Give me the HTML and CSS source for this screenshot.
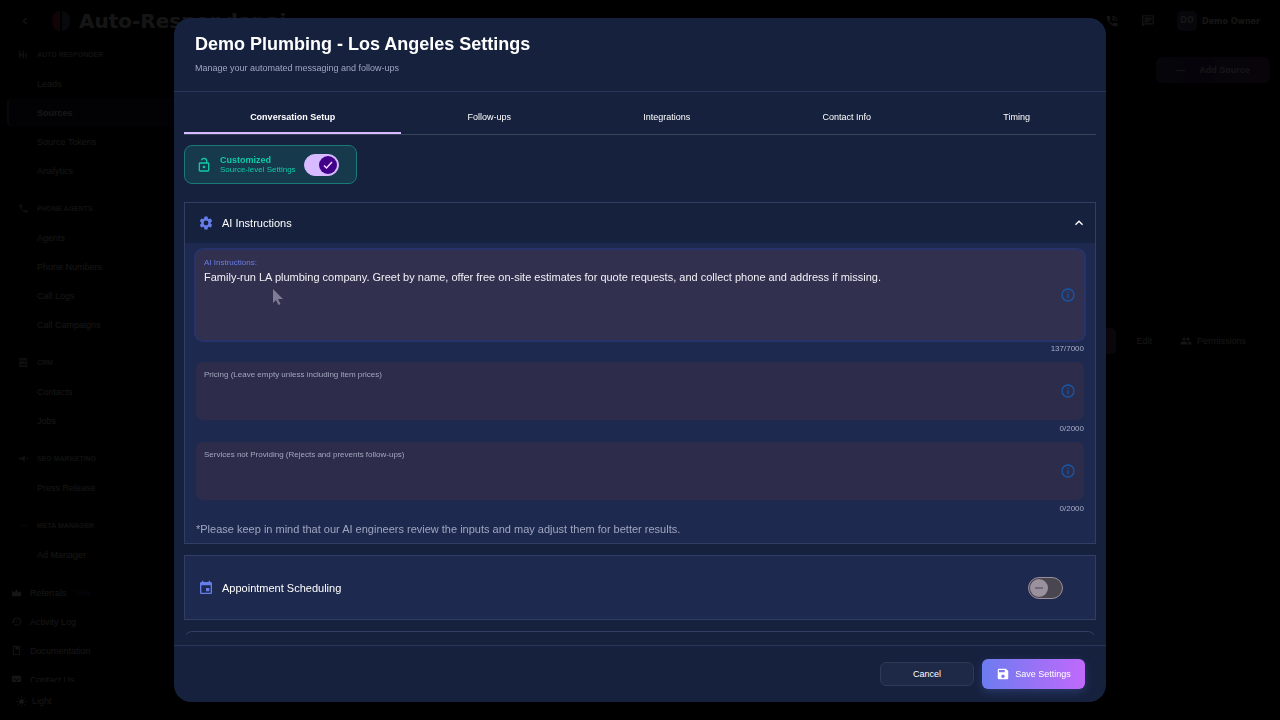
FILE: index.html
```html
<!DOCTYPE html>
<html lang="en">
<head>
    <meta charset="UTF-8">
    <meta name="viewport" content="width=device-width, initial-scale=1.0">
    <title>Demo Plumbing - Los Angeles Settings</title>
    <link rel="stylesheet" href="styles.css">
</head>
<body>
    <div class="app">
        <header class="topbar">
            <button class="icon-button" type="button" aria-label="Back">
                <svg viewBox="0 0 24 24" width="14" height="14"><path d="M15.4 7.4 14 6l-6 6 6 6 1.4-1.4-4.6-4.6z"/></svg>
            </button>
            <svg class="logo" viewBox="0 0 20 22" width="20" height="22">
                <path fill="#a02c3c" d="M9 1C4 1 1 5 1 11s3 10 8 10z"/>
                <path fill="#4a6078" d="M11 1c5 0 8 4 8 10s-3 10-8 10z"/>
            </svg>
            <span class="brand">Auto-Responder.ai</span>
            <div class="topbar-right">
                <svg viewBox="0 0 24 24" width="14" height="14"><path d="M20 15.500c-1.200 0-2.400-.2-3.600-.6-.4-.1-.7 0-1 .2l-2.200 2.200a15 15 0 0 1-6.600-6.600l2.200-2.200c.3-.3.4-.7.2-1C8.700 6.400 8.500 5.200 8.500 4c0-.6-.4-1-1-1H4c-.6 0-1 .4-1 1 0 9.400 7.600 17 17 17 .6 0 1-.4 1-1v-3.500c0-.5-.4-1-1-1zM19 12h2a9 9 0 0 0-9-9v2a7 7 0 0 1 7 7zm-4 0h2a5 5 0 0 0-5-5v2a3 3 0 0 1 3 3z"/></svg>
                <svg viewBox="0 0 24 24" width="14" height="14"><path d="M20 2H4a2 2 0 0 0-2 2v18l4-4h14a2 2 0 0 0 2-2V4a2 2 0 0 0-2-2zm0 14H4V4h16zM6 12h8v2H6zm0-3h12v2H6zm0-3h12v2H6z"/></svg>
                <div class="user">
                    <span class="avatar">DO</span>
                    <span>Demo Owner</span>
                </div>
            </div>
        </header>
        <div class="layout">
            <aside class="sidebar">
                <nav class="sidebar-nav">
                    <h3><svg viewBox="0 0 24 24" width="11" height="11"><path d="M2 4h3v7h5V4h3v16h-3v-6H5v6H2zm14 6h3v10h-3z"/></svg>AUTO RESPONDER</h3>
                    <a href="#">Leads</a>
                    <a href="#" class="active">Sources</a>
                    <a href="#">Source Tokens</a>
                    <a href="#">Analytics</a>
                    <h3><svg viewBox="0 0 24 24" width="11" height="11"><path d="M20 15.500c-1.200 0-2.400-.2-3.600-.6-.4-.1-.7 0-1 .2l-2.200 2.200a15 15 0 0 1-6.600-6.600l2.200-2.200c.3-.3.4-.7.2-1C8.700 6.400 8.500 5.200 8.500 4c0-.6-.4-1-1-1H4c-.6 0-1 .4-1 1 0 9.400 7.600 17 17 17 .6 0 1-.4 1-1v-3.500c0-.5-.4-1-1-1z"/></svg>PHONE AGENTS</h3>
                    <a href="#">Agents</a>
                    <a href="#">Phone Numbers</a>
                    <a href="#">Call Logs</a>
                    <a href="#">Call Campaigns</a>
                    <h3><svg viewBox="0 0 24 24" width="11" height="11"><path d="M3 2h17v20H3zm3 4v4h4V6zm6 0v2h6V6zm0 4v2h6v-2zm-6 5v3h12v-3z"/></svg>CRM</h3>
                    <a href="#">Contacts</a>
                    <a href="#">Jobs</a>
                    <h3><svg viewBox="0 0 24 24" width="11" height="11"><path d="M2 10h6l7-5v14l-7-5H2zm15 1h6v2h-6z"/></svg>SEO MARKETING</h3>
                    <a href="#">Press Release</a>
                    <h3><svg viewBox="0 0 24 24" width="11" height="11" class="faint"><path d="M2 10h20v4H2z"/></svg>META MANAGER</h3>
                    <a href="#">Ad Manager</a>
                    <div class="more">
                        <a href="#"><svg viewBox="0 0 24 24" width="11" height="11"><path d="M2 8l5 4 5-7 5 7 5-4v12H2z"/></svg>Referrals <span class="new">NEW</span></a>
                        <a href="#"><svg viewBox="0 0 24 24" width="11" height="11"><path d="M13 3a9 9 0 0 0-9 9H1l4 4 4-4H6a7 7 0 1 1 2 5l-1.400 1.400A9 9 0 1 0 13 3zm-1 5v5l4 3 1-1-3.500-2.500V8z"/></svg>Activity Log</a>
                        <a href="#"><svg viewBox="0 0 24 24" width="11" height="11"><path d="M4 2h16v20H4zm2 2v16h12V4h-2v7l-3-2-3 2V4z"/></svg>Documentation</a>
                        <a href="#"><svg viewBox="0 0 24 24" width="11" height="11"><path d="M2 4h20v16H2zm2 4v2l8 5 8-5V8l-8 5z"/></svg>Contact Us</a>
                    </div>
                </nav>
                <button class="theme" type="button">
                    <svg viewBox="0 0 24 24" width="11" height="11"><circle cx="12" cy="12" r="5"/><path d="M11 1h2v4h-2zm0 18h2v4h-2zM1 11h4v2H1zm18 0h4v2h-4zM4 5l1-1 3 3-1 1zm12 12 1-1 3 3-1 1zM4 19l3-3 1 1-3 3zM16 7l3-3 1 1-3 3z"/></svg>
                    Light
                </button>
            </aside>
            <main class="content">
                <button class="add" type="button"><span>—</span> Add Source</button>
                <section class="source-card">
                    <button class="chip-button" type="button" aria-label="Settings"></button>
                    <button type="button">Edit</button>
                    <button type="button"><svg viewBox="0 0 24 24" width="12" height="12"><path d="M8 11a3 3 0 1 0 0-6 3 3 0 0 0 0 6zm8 0a3 3 0 1 0 0-6 3 3 0 0 0 0 6zm-8 2c-2.300 0-7 1.200-7 3.500V19h14v-2.500C15 14.200 10.300 13 8 13zm8 0h-1c1.200.8 2 2 2 3.500V19h6v-2.500c0-2.300-4.700-3.500-7-3.500z"/></svg>Permissions</button>
                </section>
            </main>
        </div>
    </div>

    <div class="backdrop">
        <div class="dialog" role="dialog" aria-modal="true" aria-labelledby="dialogTitle">
            <header class="dialog-header">
                <h2 id="dialogTitle">Demo Plumbing - Los Angeles Settings</h2>
                <p>Manage your automated messaging and follow-ups</p>
            </header>

            <div class="dialog-body">
                <div class="tabs" role="tablist">
                    <button class="tab selected" type="button" role="tab" aria-selected="true">Conversation Setup</button>
                    <button class="tab" type="button" role="tab">Follow-ups</button>
                    <button class="tab" type="button" role="tab">Integrations</button>
                    <button class="tab" type="button" role="tab">Contact Info</button>
                    <button class="tab" type="button" role="tab">Timing</button>
                </div>

                <div class="panel">
                    <div class="customized">
                        <svg viewBox="0 0 24 24" width="16" height="16"><path d="M18 8h-1V6A5 5 0 0 0 7.200 4.600l1.900.5A3 3 0 0 1 15 6v2H6a2 2 0 0 0-2 2v10c0 1.100.9 2 2 2h12a2 2 0 0 0 2-2V10a2 2 0 0 0-2-2zm0 12H6V10h12zm-6-3a2 2 0 1 0 0-4 2 2 0 0 0 0 4z"/></svg>
                        <label for="customized">
                            <strong>Customized</strong>
                            <span>Source-level Settings</span>
                        </label>
                        <span class="switch">
                            <input type="checkbox" id="customized" checked>
                            <svg class="thumb" viewBox="0 0 18 18" width="18" height="18"><circle cx="9" cy="9" r="9"/><path d="m5 9.500 2.500 2.500L13 6"/></svg>
                        </span>
                    </div>

                    <section class="card">
                        <button class="card-header" type="button" aria-expanded="true">
                            <svg class="accent" viewBox="0 0 24 24" width="16" height="16"><path d="M19.140 12.940c.04-.3.060-.61.060-.94s-.02-.64-.07-.94l2.030-1.580a.49.49 0 0 0 .12-.61l-1.920-3.320a.49.49 0 0 0-.59-.22l-2.390.96c-.5-.38-1.030-.7-1.620-.94l-.36-2.540A.48.48 0 0 0 13.920 2.400h-3.840c-.24 0-.43.17-.47.41l-.36 2.540c-.59.24-1.130.57-1.620.94l-2.390-.96a.48.48 0 0 0-.59.22L2.740 8.870c-.12.21-.08.47.12.61l2.030 1.580c-.05.3-.09.63-.09.94s.02.64.07.94l-2.030 1.580a.49.49 0 0 0-.12.61l1.920 3.320c.12.22.37.29.59.22l2.390-.96c.5.38 1.030.7 1.620.94l.36 2.540c.05.24.24.41.48.41h3.840c.24 0 .44-.17.47-.41l.36-2.540c.59-.24 1.130-.56 1.620-.94l2.390.96c.22.08.47 0 .59-.22l1.920-3.320a.48.48 0 0 0-.12-.61zM12 15.600a3.600 3.600 0 1 1 0-7.200 3.600 3.600 0 0 1 0 7.200z"/></svg>
                            <span>AI Instructions</span>
                            <svg class="chevron" viewBox="0 0 24 24" width="16" height="16"><path d="m12 8-6 6 1.400 1.400 4.600-4.600 4.600 4.600L18 14z"/></svg>
                        </button>
                        <div class="card-body">
                            <div class="field focused">
                                <div class="field-text">
                                    <label for="instructions">AI Instructions:</label>
                                    <textarea id="instructions" rows="4">Family-run LA plumbing company. Greet by name, offer free on-site estimates for quote requests, and collect phone and address if missing.</textarea>
                                </div>
                                <svg class="info" viewBox="0 0 24 24" width="16" height="16"><path d="M11 7h2v2h-2zm0 4h2v6h-2zm1-9a10 10 0 1 0 0 20 10 10 0 0 0 0-20zm0 18a8 8 0 1 1 0-16 8 8 0 0 1 0 16z"/></svg>
                            </div>
                            <p class="counter">137/7000</p>
                            <div class="field">
                                <div class="field-text">
                                    <label for="pricing">Pricing (Leave empty unless including item prices)</label>
                                    <textarea id="pricing" rows="2"></textarea>
                                </div>
                                <svg class="info" viewBox="0 0 24 24" width="16" height="16"><path d="M11 7h2v2h-2zm0 4h2v6h-2zm1-9a10 10 0 1 0 0 20 10 10 0 0 0 0-20zm0 18a8 8 0 1 1 0-16 8 8 0 0 1 0 16z"/></svg>
                            </div>
                            <p class="counter">0/2000</p>
                            <div class="field">
                                <div class="field-text">
                                    <label for="services">Services not Providing (Rejects and prevents follow-ups)</label>
                                    <textarea id="services" rows="2"></textarea>
                                </div>
                                <svg class="info" viewBox="0 0 24 24" width="16" height="16"><path d="M11 7h2v2h-2zm0 4h2v6h-2zm1-9a10 10 0 1 0 0 20 10 10 0 0 0 0-20zm0 18a8 8 0 1 1 0-16 8 8 0 0 1 0 16z"/></svg>
                            </div>
                            <p class="counter">0/2000</p>
                            <p class="note">*Please keep in mind that our AI engineers review the inputs and may adjust them for better results.</p>
                        </div>
                    </section>

                    <section class="card card-row">
                        <svg class="accent" viewBox="0 0 24 24" width="16" height="16"><path d="M17 12h-5v5h5zM16 1v2H8V1H6v2H5a2 2 0 0 0-2 2v14c0 1.100.9 2 2 2h14a2 2 0 0 0 2-2V5a2 2 0 0 0-2-2h-1V1zm3 18H5V8h14z"/></svg>
                        <label for="scheduling">Appointment Scheduling</label>
                        <span class="switch">
                            <input type="checkbox" id="scheduling">
                            <svg class="thumb" viewBox="0 0 18 18" width="18" height="18"><circle cx="9" cy="9" r="9"/><path d="M5 9h8"/></svg>
                        </span>
                    </section>

                    <section class="card card-next"></section>
                </div>
            </div>

            <footer class="dialog-footer">
                <button class="cancel" type="button">Cancel</button>
                <button class="save" type="button">
                    <svg viewBox="0 0 24 24" width="14" height="14"><path d="M17 3H5a2 2 0 0 0-2 2v14c0 1.100.9 2 2 2h14a2 2 0 0 0 2-2V7zm-5 16a3 3 0 1 1 0-6 3 3 0 0 1 0 6zm3-10H5V5h10z"/></svg>
                    Save Settings
                </button>
            </footer>
        </div>
    </div>

    <svg class="cursor" viewBox="0 0 12 18" width="12" height="18"><path d="M1 1v14l3-3 2.500 5 2-1L6 11h5z"/></svg>
</body>
</html>
```
FILE: styles.css
```css
* {
    box-sizing: border-box;
}
body {
    margin: 0;
    background: #000;
    color: #fff;
    font-family: "Liberation Sans", Arial, sans-serif;
    overflow: hidden;
}
button {
    font-family: inherit;
    color: inherit;
    background: none;
    border: none;
    padding: 0;
    cursor: pointer;
}
svg {
    fill: currentColor;
    flex-shrink: 0;
}
h2, h3, p {
    margin: 0;
}

/* page behind the dialog */
.app {
    display: flex;
    flex-direction: column;
    height: 100vh;
    color: #d8d8d8;
}
.topbar {
    display: flex;
    align-items: center;
    height: 42px;
    padding: 0 20px 0 18px;
}
.icon-button {
    display: flex;
    margin-right: 19px;
}
.brand {
    margin-left: 8px;
    font-family: "DejaVu Sans", Verdana, sans-serif;
    font-size: 20px;
    font-weight: bold;
}
.topbar-right {
    display: flex;
    align-items: center;
    gap: 22px;
    margin-left: auto;
}
.user {
    display: flex;
    align-items: center;
    gap: 5px;
    font-family: "DejaVu Sans", Verdana, sans-serif;
    font-size: 8px;
    font-weight: bold;
}
.avatar {
    width: 20px;
    line-height: 20px;
    border-radius: 5px;
    background: #4a4370;
    text-align: center;
}
.layout {
    display: flex;
    flex: 1;
    min-height: 0;
}
.sidebar {
    display: flex;
    flex-direction: column;
    width: 180px;
    font-size: 9px;
}
.sidebar-nav {
    flex: 1;
    min-height: 0;
    overflow: hidden;
}
.sidebar h3 {
    display: flex;
    align-items: center;
    gap: 8px;
    height: 29px;
    margin-top: 9px;
    padding-left: 18px;
    font-size: 7px;
    font-weight: bold;
    color: #a0a0a0;
}
.sidebar h3:first-child {
    margin-top: -2px;
}
.sidebar a {
    display: flex;
    align-items: center;
    height: 29px;
    margin-left: 7px;
    padding-left: 30px;
    color: inherit;
    text-decoration: none;
}
.sidebar .active {
    padding-left: 28px;
    border-left: 2px solid #565676;
    border-radius: 5px;
    background: #1c1c2a;
    font-weight: bold;
}
.sidebar .more {
    margin-top: 9px;
}
.sidebar .more a {
    gap: 8px;
    margin-left: 0;
    padding-left: 11px;
}
.faint {
    opacity: 0.3;
}
.new {
    color: #3c4c9c;
    font-size: 7px;
}
.theme {
    display: flex;
    align-items: center;
    gap: 5px;
    height: 38px;
    padding-left: 16px;
    font-size: 9px;
}
.content {
    display: flex;
    flex: 1;
    flex-direction: column;
    align-items: flex-end;
    padding: 15px 10px;
}
.add {
    width: 114px;
    height: 26px;
    border-radius: 6px;
    background: linear-gradient(90deg, #343464, #542868);
    font-size: 9px;
    font-weight: bold;
}
.add span {
    margin-right: 12px;
}
.source-card {
    display: flex;
    justify-content: flex-end;
    align-items: center;
    gap: 12px;
    width: 100%;
    margin-top: 245px;
    padding-right: 16px;
}
.source-card button {
    display: flex;
    align-items: center;
    gap: 5px;
    height: 26px;
    padding: 0 8px;
    font-size: 9px;
}
.source-card .chip-button {
    width: 50px;
    border-radius: 5px;
    background: #6c3c7c;
}

/* dialog */
.backdrop {
    position: fixed;
    inset: 0;
    display: flex;
    align-items: center;
    justify-content: center;
    background: rgba(0, 0, 0, 0.9);
}
.dialog {
    display: flex;
    flex-direction: column;
    width: 90%;
    max-width: 932px;
    height: 95vh;
    border-radius: 17px;
    background: #16213e;
    overflow: hidden;
}
.dialog-header {
    padding: 14px 21px 16px;
    border-bottom: 1px solid #28345a;
}
.dialog-header h2 {
    font-size: 18px;
    line-height: 24px;
}
.dialog-header p {
    margin-top: 5px;
    color: #a0a6c0;
    font-size: 9px;
    line-height: 14px;
}
.dialog-body {
    display: flex;
    flex: 1;
    flex-direction: column;
    min-height: 0;
    padding: 10px;
}
.tabs {
    display: flex;
    border-bottom: 1px solid #38435a;
}
.tab {
    flex: 1 1 auto;
    height: 32px;
    border-bottom: 2px solid transparent;
    font-size: 9px;
}
.tab.selected {
    border-color: #d7baff;
    font-weight: bold;
}
.panel {
    display: flex;
    flex: 1;
    flex-direction: column;
    gap: 11px;
    min-height: 0;
    padding-top: 10px;
    overflow: hidden;
}
.panel > * {
    flex-shrink: 0;
}
.customized {
    display: flex;
    align-items: center;
    align-self: flex-start;
    gap: 8px;
    height: 39px;
    margin-bottom: 7px;
    padding: 0 17px 0 11px;
    border: 1px solid #197a78;
    border-radius: 8px;
    background: #163a4c;
    color: #0fcaa6;
}
.customized label {
    display: flex;
    flex-direction: column;
    font-size: 8px;
    line-height: 10px;
}
.customized strong {
    font-size: 9px;
}
.switch {
    display: grid;
    align-items: center;
}
.switch input {
    grid-area: 1 / 1;
    appearance: none;
    width: 35px;
    height: 22px;
    margin: 0;
    border: 1px solid #978f9a;
    border-radius: 11px;
    background: #4a464f;
    cursor: pointer;
}
.thumb {
    grid-area: 1 / 1;
    margin-left: 2px;
    fill: #9a909e;
    pointer-events: none;
}
.thumb path {
    fill: none;
    stroke: #4a464f;
    stroke-width: 1;
}
.switch input:checked {
    border-color: #d7baff;
    background: #d7baff;
}
.switch input:checked + .thumb {
    margin-left: 15px;
    fill: #42008a;
}
.switch input:checked + .thumb path {
    stroke: #f0dcff;
    stroke-width: 1.500;
}
.card {
    border: 1px solid #303d64;
    background: #1e294f;
}
.card-header {
    display: flex;
    align-items: center;
    gap: 8px;
    width: 100%;
    height: 40px;
    padding: 0 8px 0 13px;
    background: #16213e;
    font-size: 11px;
}
.accent {
    color: #667eea;
}
.chevron {
    margin-left: auto;
}
.card-body {
    padding: 7px 11px;
}
.field {
    display: flex;
    align-items: center;
    padding: 7px 8px;
    border-radius: 7px;
    background: #2d2c4a;
}
.field.focused {
    background: #32304f;
    box-shadow: 0 0 0 2px #27336a;
}
.field-text {
    display: flex;
    flex: 1;
    flex-direction: column;
}
.field label {
    color: #a3a7bf;
    font-size: 8px;
    line-height: 12px;
}
.field.focused label {
    color: #667eea;
}
.field textarea {
    width: 100%;
    padding: 0;
    border: none;
    outline: none;
    background: none;
    color: #f0f0f6;
    font-family: inherit;
    font-size: 11px;
    line-height: 16px;
    resize: none;
    overflow: hidden;
}
.info {
    color: #1458ac;
}
.counter {
    margin-bottom: 7px;
    padding-top: 3px;
    color: #a9adc6;
    font-size: 8px;
    line-height: 12px;
    text-align: right;
}
.note {
    color: #a0a6c0;
    font-size: 11px;
    line-height: 14px;
}
.card-row {
    display: flex;
    align-items: center;
    gap: 8px;
    height: 65px;
    padding: 0 32px 0 13px;
    font-size: 11px;
}
.card-row label {
    flex: 1;
}
.card-next {
    height: 65px;
    border-radius: 8px 8px 0 0;
    background: none;
}
.dialog-footer {
    display: flex;
    align-items: center;
    justify-content: flex-end;
    gap: 8px;
    height: 57px;
    padding: 0 21px;
    border-top: 1px solid #28345a;
}
.dialog-footer button {
    display: flex;
    align-items: center;
    justify-content: center;
    gap: 5px;
    font-size: 9px;
}
.dialog-footer .cancel {
    width: 94px;
    height: 24px;
    border: 1px solid #2f3a56;
    border-radius: 6px;
    background: #1e2947;
}
.dialog-footer .save {
    width: 103px;
    height: 30px;
    border-radius: 6px;
    background: linear-gradient(90deg, #6d7cf0, #c069fb);
    box-shadow: 0 3px 10px rgba(102, 126, 234, 0.25);
}
.cursor {
    position: absolute;
    left: 272px;
    top: 288px;
    fill: #7d7c94;
    pointer-events: none;
}
```
